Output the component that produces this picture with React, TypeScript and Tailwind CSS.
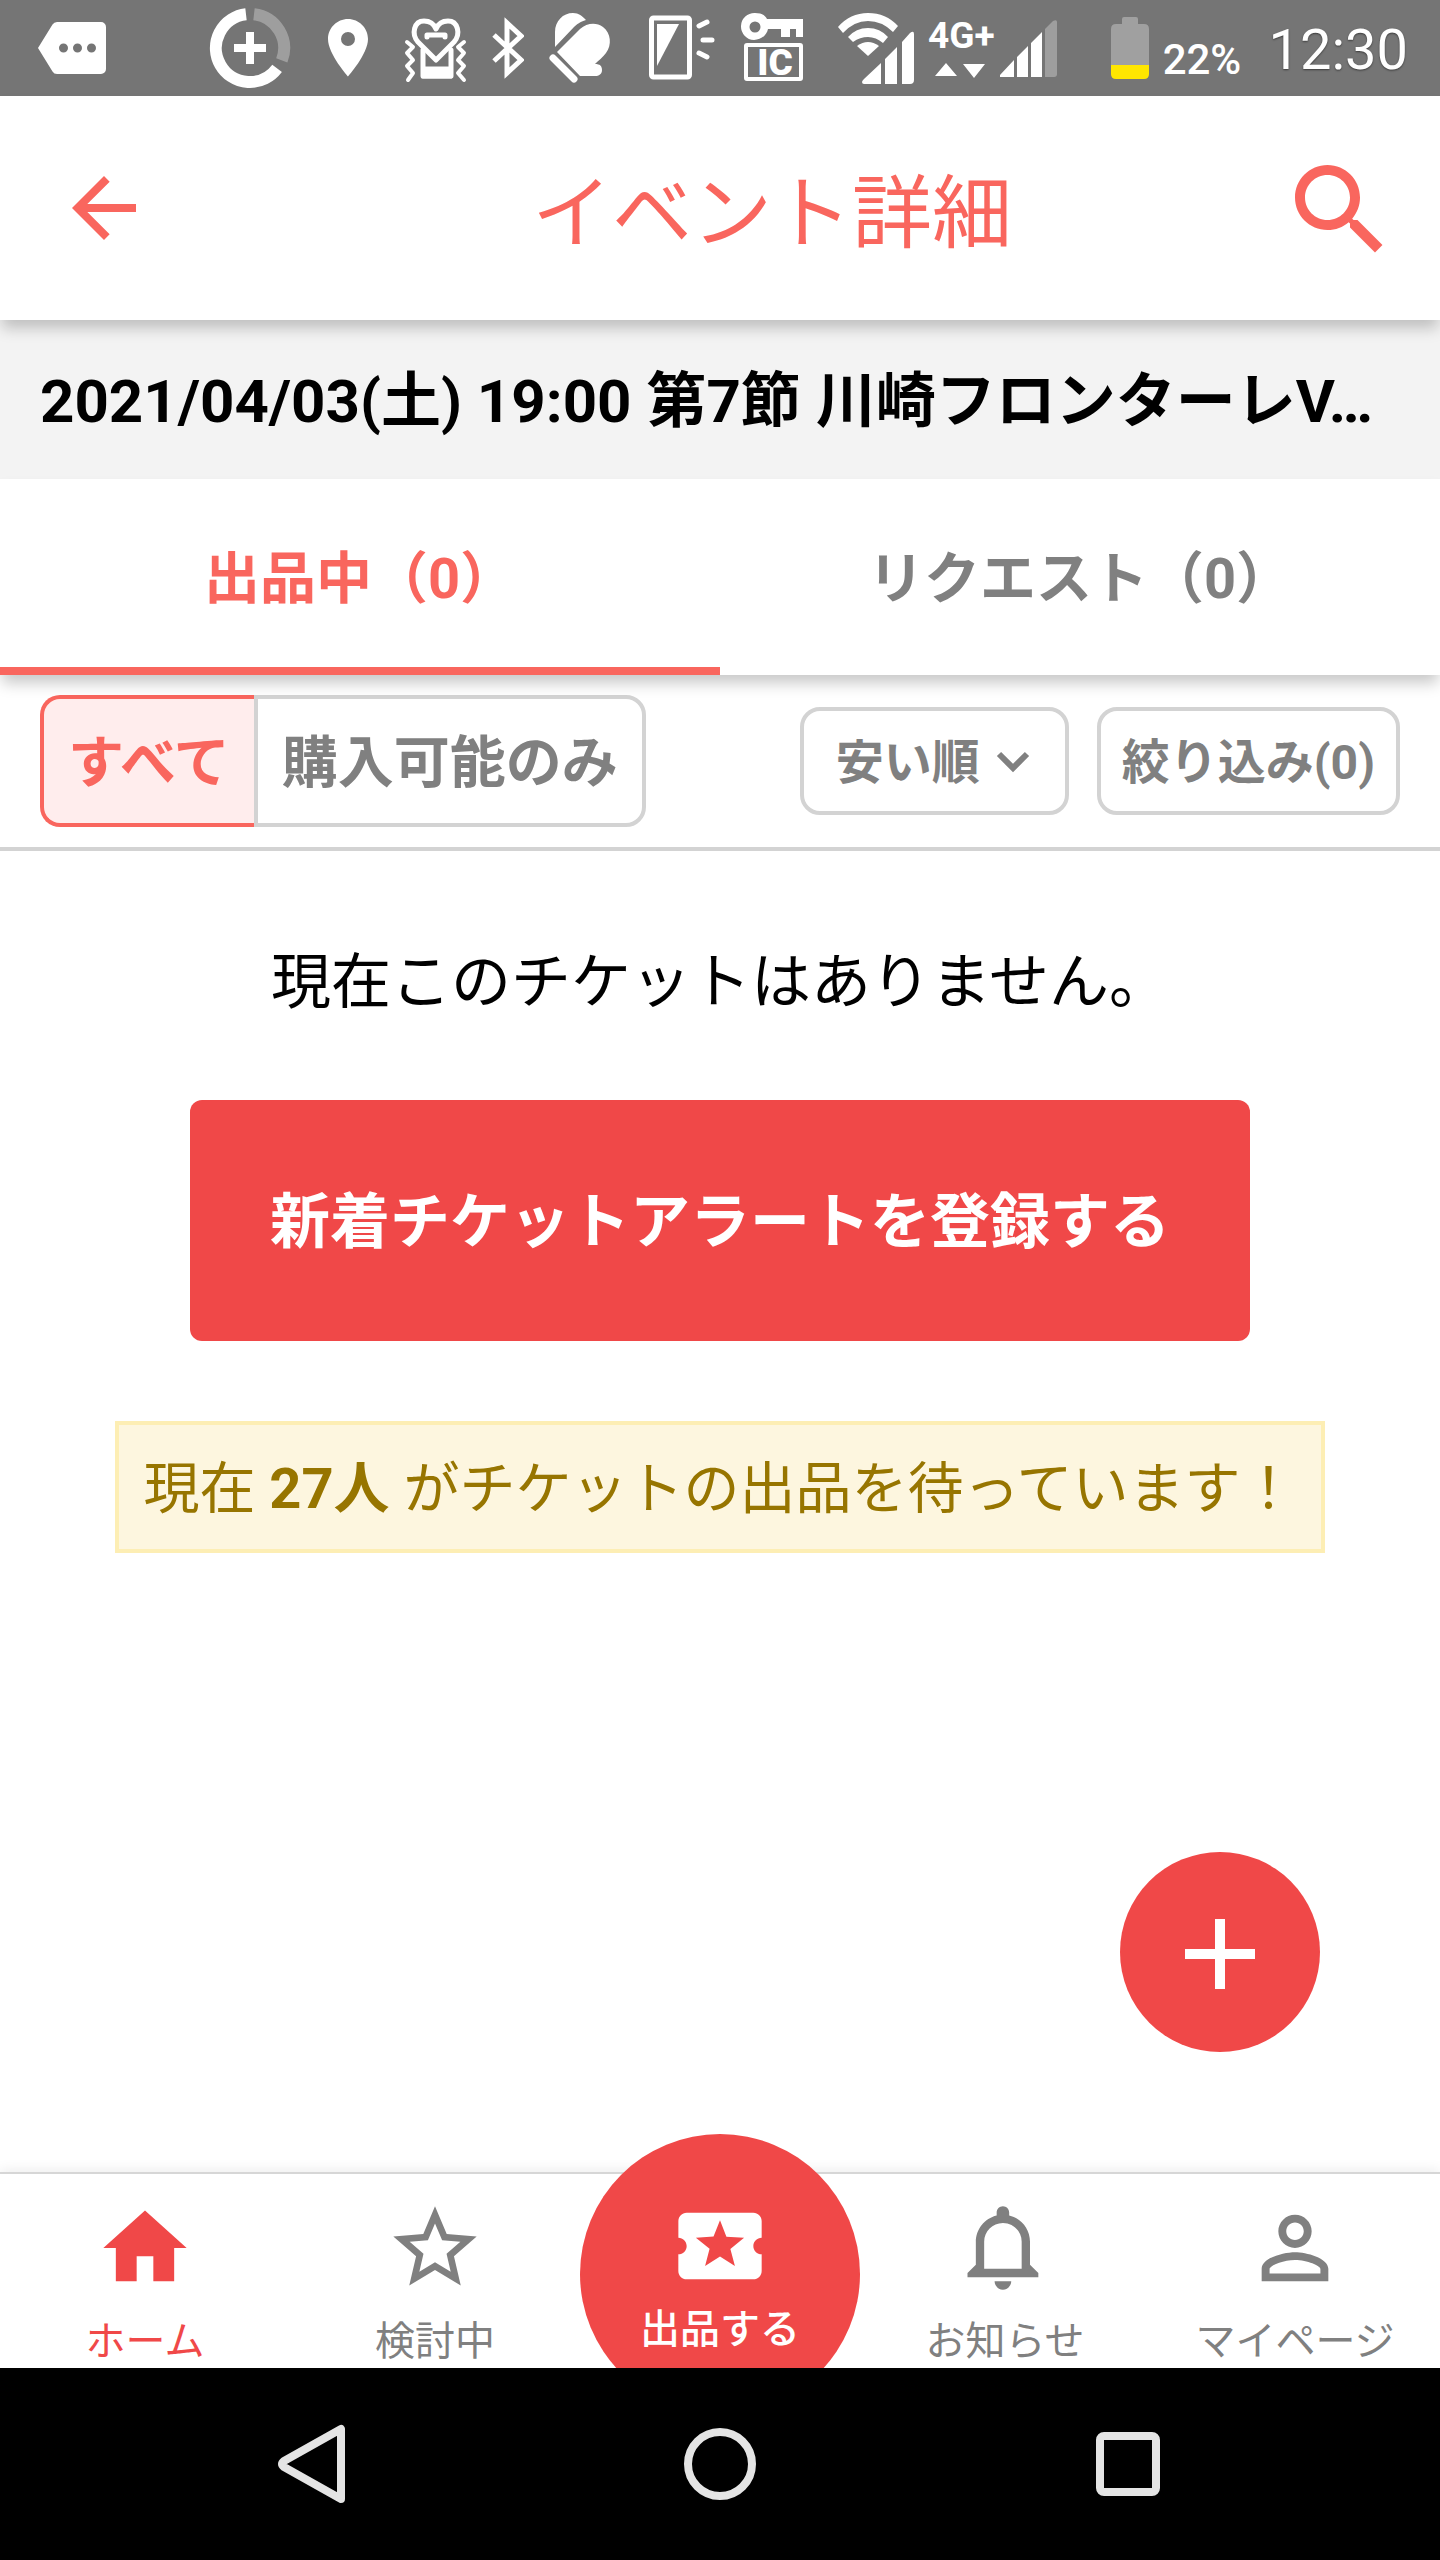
import React from 'react'
import clsx from 'clsx'

//=========Status Bar=========

function StatusBar(): React.ReactElement {
  return (
    <div className="flex h-24 shrink-0 items-center bg-[#757575] pr-8 pl-9 text-white">
      <svg className="h-24 w-18" viewBox="36 0 72 96" fill="currentColor">
        <path
          fillRule="evenodd"
          d="M57 22h44a5 5 0 0 1 5 5v42a5 5 0 0 1-5 5H57q-3 0-4.500-2.500L38 48l14.500-23.500Q54 22 57 22zM63.500 43.500a4.500 4.500 0 1 0 0 9 4.500 4.500 0 0 0 0-9zm14 0a4.500 4.500 0 1 0 0 9 4.500 4.500 0 0 0 0-9zm14 0a4.500 4.500 0 1 0 0 9 4.500 4.500 0 0 0 0-9z"
        />
      </svg>
      <svg
        className="ml-25 h-24 w-21"
        viewBox="208 0 84 96"
        fill="none"
        stroke="currentColor"
        strokeWidth="12"
      >
        <path d="M246 14.240A34 34 0 1 0 277.100 68.400" />
        <path d="M254 14.240A34 34 0 0 1 281.800 60.300" opacity=".3" />
        <path d="M250 32v32M234 48h32" strokeWidth="8" />
      </svg>
      <svg className="ml-9 h-24 w-10" viewBox="328 0 40 96" fill="currentColor">
        <path
          fillRule="evenodd"
          d="M348 19c-11 0-20 9-20 20 0 15 20 37.500 20 37.500S368 54 368 39c0-11-9-20-20-20zm0 13a7 7 0 1 1 0 14 7 7 0 0 1 0-14z"
        />
      </svg>
      <svg
        className="ml-9 h-24 w-16"
        viewBox="404 0 64 96"
        fill="none"
        stroke="currentColor"
        strokeWidth="4"
        strokeLinejoin="round"
        strokeLinecap="round"
      >
        <path d="M423 50v26h28V50M427 37v-2h18v2" strokeWidth="5" />
        <path d="M422 67h30v11h-30z" fill="currentColor" strokeWidth="1" />
        <path
          d="M436 60L418 42C411 34 414 21 424 21c6 0 10 3 12 8 2-5 6-8 12-8 10 0 13 13 6 21z"
          strokeWidth="5"
        />
        <path d="M407 42l6 5-6 6 6 7-6 6 6 7-5 7M464 42l-6 5 6 6-6 7 6 6-6 7 6 7" />
      </svg>
      <svg
        className="ml-6 h-24 w-8"
        viewBox="492 0 32 96"
        fill="none"
        stroke="currentColor"
        strokeWidth="5"
      >
        <path d="M494 35l27 25-14 13V23l14 13-27 25" />
      </svg>
      <svg className="ml-6 h-24 w-16" viewBox="548 0 64 96" fill="currentColor">
        <path d="M555 47V32c0-11 8-19 18-19 6 0 9 3 13 7-6 2-9 4-12 7z" />
        <path d="M557 52l23-23c7-6 16-7 23-2 8 6 9 18 3 26-3 4-8 8-11 11 5 0 7 2 7 6 0 4-3 6-7 6h-15z" />
        <path
          d="M553 58l21 21"
          stroke="currentColor"
          strokeWidth="7"
          strokeLinecap="round"
        />
      </svg>
      <svg
        className="ml-9 h-24 w-17"
        viewBox="648 0 68 96"
        fill="none"
        stroke="currentColor"
        strokeWidth="5"
        strokeLinecap="round"
      >
        <rect x="651.500" y="18" width="38" height="59" rx="2" />
        <path d="M657 24h22l-22 42z" fill="currentColor" stroke="none" />
        <path d="M699 26l8-4M703 40h9M699 53l8 4" />
      </svg>
      <svg className="ml-6 h-24 w-16" viewBox="740 0 64 96" fill="currentColor">
        <path
          fillRule="evenodd"
          d="M755 13c6 0 10 2 12 6h36v18h-7v-8h-6v8h-9v-8h-13c-1 6-7 11-14 11a13.500 13.500 0 1 1 1-27zm0 8.500a5.500 5.500 0 1 0 0 11 5.500 5.500 0 0 0 0-11z"
        />
        <rect
          x="746"
          y="45"
          width="55"
          height="34"
          rx="1"
          fill="none"
          stroke="currentColor"
          strokeWidth="4"
        />
        <text
          x="775"
          y="75"
          textAnchor="middle"
          className="font-['Roboto',sans-serif] text-[37px] font-black"
        >
          IC
        </text>
      </svg>
      <svg className="ml-8 h-24 w-20" viewBox="836 0 80 96" fill="currentColor">
        <path d="M838 27Q850 13 868 13T898 26L893 32Q882 21 868 21T843 33z" />
        <path d="M848 37Q856 28 868 28T888 37L883 43Q876 37 868 37T853 42z" />
        <path d="M857 46Q868 38 879 46L868 56z" />
        <path d="M862 82q0-1 2-3l17-16v21h-17q-2 0-2-2zM885 59l12-12v37h-12zM902 42l8-9q4-3 4 1v46q0 4-4 4h-8z" />
      </svg>
      <div className="ml-3 flex flex-col items-center gap-2">
        <span className="text-[37px] leading-[36px] font-bold">4G+</span>
        <svg className="h-4 w-13" viewBox="0 0 52 16" fill="currentColor">
          <path d="M0 14h22L11 1zM28 2h22L39 16z" />
        </svg>
      </div>
      <svg className="ml-1 h-24 w-15" viewBox="999 0 60 96" fill="currentColor">
        <path d="M1000 75l14-15v17h-14zM1017 57l11-11v31h-11zM1031 43l11-11v45h-11z" />
        <path d="M1045 29l8-8q4-2 4 1v52q0 3-3 3h-9z" opacity=".3" />
      </svg>
      <svg className="ml-13 h-24 w-10" viewBox="1111 0 40 96">
        <path
          d="M1116 24h6v-5q0-2 2-2h12q2 0 2 2v5h6q5 0 5 5v36h-38V29q0-5 5-5z"
          fill="#a0a0a0"
        />
        <path d="M1111 65h38v9q0 5-5 5h-28q-5 0-5-5z" fill="#ffe600" />
      </svg>
      <span className="ml-3 pt-6 text-[42px] leading-none font-medium">22%</span>
      <span className="ml-auto pt-1 text-[56px] leading-none [text-shadow:0_1px_2px_rgb(0_0_0/0.5)]">
        12:30
      </span>
    </div>
  )
}

//=========Bottom Navigation=========

const NAV_ITEMS = [
  {
    label: 'ホーム',
    active: true,
    path: 'M10 20v-6h4v6h5v-8h3L12 3 2 12h3v8z',
  },
  {
    label: '検討中',
    active: false,
    path: 'M22 9.240l-7.190-.62L12 2 9.190 8.630 2 9.240l5.460 4.730L5.820 21 12 17.270 18.180 21l-1.630-7.030L22 9.240zM12 15.400l-3.760 2.270 1-4.280-3.320-2.880 4.380-.38L12 6.100l1.710 4.040 4.380.38-3.320 2.880 1 4.280L12 15.400z',
  },
  {
    label: 'お知らせ',
    active: false,
    path: 'M11.500 22c1.100 0 2-.9 2-2h-4c0 1.100.9 2 2 2zm6.500-6v-5.500c0-3.070-2.130-5.640-5-6.320V3.500c0-.83-.67-1.500-1.500-1.500S10 2.670 10 3.500v.68c-2.870.68-5 3.250-5 6.320V16l-2 2v1h17v-1l-2-2zm-2 1H7v-6.500C7 8.010 9.010 6 11.500 6S16 8.010 16 10.500V17z',
  },
  {
    label: 'マイページ',
    active: false,
    path: 'M12 5.900c1.160 0 2.100.94 2.100 2.100s-.94 2.100-2.100 2.100S9.900 9.160 9.900 8s.94-2.100 2.100-2.100m0 9c2.970 0 6.100 1.460 6.100 2.100v1.100H5.900V17c0-.64 3.130-2.100 6.100-2.100M12 4C9.790 4 8 5.790 8 8s1.790 4 4 4 4-1.790 4-4-1.790-4-4-4zm0 9c-2.670 0-8 1.340-8 4v3h16v-3c0-2.660-5.330-4-8-4z',
  },
]

function NavItem({
  label,
  active,
  path,
}: {
  label: string
  active: boolean
  path: string
}): React.ReactElement {
  return (
    <a
      href="#"
      className={clsx(
        'flex flex-1 flex-col items-center gap-4 pt-6 text-[40px] leading-[56px]',
        active ? 'text-[#f04848]' : 'text-[#808080]',
      )}
    >
      <svg
        className="size-[100px] shrink-0"
        viewBox="0 0 24 24"
        fill="currentColor"
      >
        <path d={path} />
      </svg>
      <span className="whitespace-nowrap">{label}</span>
    </a>
  )
}

function BottomNav(): React.ReactElement {
  return (
    <nav className="h-[196px] shrink-0 border-t-2 border-[#d6d6d6] bg-white shadow-[0_-2px_12px_rgb(0_0_0/0.08)]">
      {/* the sell button rises above the bar and is cut off at its lower edge */}
      <div className="-mt-10 flex h-[234px] overflow-hidden pt-10">
        {NAV_ITEMS.slice(0, 2).map((item) => (
          <NavItem key={item.label} {...item} />
        ))}
        <a
          href="#"
          className="-mt-10 flex size-[280px] shrink-0 flex-col items-center rounded-full bg-[#f04848] pt-[62px] text-[40px] leading-[68px] font-medium text-white"
        >
          <svg
            className="size-[100px] shrink-0"
            viewBox="0 0 24 24"
            fill="currentColor"
          >
            <path d="M20 12c0-1.100.9-2 2-2V6c0-1.100-.9-2-2-2H4c-1.100 0-1.990.9-1.990 2v4c1.100 0 1.990.9 1.990 2s-.89 2-2 2v4c0 1.100.9 2 2 2h16c1.100 0 2-.9 2-2v-4c-1.100 0-2-.9-2-2zm-4.420 4.800L12 14.500l-3.580 2.300 1.080-4.120-3.290-2.690 4.240-.25L12 5.800l1.540 3.950 4.240.25-3.290 2.690 1.090 4.110z" />
          </svg>
          <span>出品する</span>
        </a>
        {NAV_ITEMS.slice(2).map((item) => (
          <NavItem key={item.label} {...item} />
        ))}
      </div>
    </nav>
  )
}

function SystemBar(): React.ReactElement {
  return (
    <div className="flex h-48 shrink-0 items-center justify-around bg-black px-27 text-[#e4e4e4]">
      <button aria-label="戻る">
        <svg
          className="size-24"
          viewBox="0 0 96 96"
          fill="none"
          stroke="currentColor"
          strokeWidth="8"
          strokeLinejoin="round"
        >
          <path d="M77 13v70L20 51q-4-3 0-6z" />
        </svg>
      </button>
      <button aria-label="ホーム">
        <svg
          className="size-24"
          viewBox="0 0 96 96"
          fill="none"
          stroke="currentColor"
          strokeWidth="8"
        >
          <circle cx="48" cy="48" r="32" />
        </svg>
      </button>
      <button aria-label="アプリ履歴">
        <svg
          className="size-24"
          viewBox="0 0 96 96"
          fill="none"
          stroke="currentColor"
          strokeWidth="8"
        >
          <rect x="20" y="20" width="56" height="56" rx="4" />
        </svg>
      </button>
    </div>
  )
}

//=========Event Detail Page=========

export default function App(): React.ReactElement {
  return (
    <div
      lang="ja"
      className="relative flex min-h-screen flex-col overflow-x-hidden bg-white font-['Roboto','Noto_Sans_CJK_JP',sans-serif] text-black"
    >
      <StatusBar />

      <header className="relative z-10 flex h-56 shrink-0 items-center bg-white pr-10 pl-14 text-[#f9665e] shadow-[0_10px_14px_-2px_rgb(0_0_0/0.22)]">
        <button aria-label="戻る">
          <svg className="size-24" viewBox="0 0 24 24" fill="currentColor">
            <path d="M20 11H7.830l5.590-5.590L12 4l-8 8 8 8 1.410-1.410L7.830 13H20v-2z" />
          </svg>
        </button>
        <h1 className="flex-1 pt-3 pl-28 text-center text-[80px] leading-none">
          イベント詳細
        </h1>
        <button aria-label="検索" className="pt-1">
          <svg className="size-30" viewBox="0 0 24 24" fill="currentColor">
            <path d="M15.500 14h-.79l-.28-.27C15.410 12.590 16 11.110 16 9.500 16 5.910 13.090 3 9.500 3S3 5.910 3 9.500 5.910 16 9.500 16c1.610 0 3.090-.59 4.230-1.570l.27.28v.79l5 4.990L20.490 19l-4.990-5zm-6 0C7.010 14 5 11.990 5 9.500S7.010 5 9.500 5 14 7.010 14 9.500 11.990 14 9.500 14z" />
          </svg>
        </button>
      </header>

      <h2 className="shrink-0 truncate bg-[#f3f3f3] px-10 pt-1 text-[60px] leading-[155px] font-bold">
        2021/04/03(土) 19:00 第7節 川崎フロンターレV…
      </h2>

      <div
        role="tablist"
        className="relative z-10 flex h-[196px] shrink-0 bg-white text-[56px] font-bold shadow-[0_10px_14px_-2px_rgb(0_0_0/0.22)]"
      >
        <button
          role="tab"
          aria-selected="true"
          className="flex-1 border-b-8 border-[#f9665e] pt-3 text-[#f9665e]"
        >
          出品中（0）
        </button>
        <button
          role="tab"
          aria-selected="false"
          className="flex-1 border-b-8 border-transparent pt-3 text-[#808080]"
        >
          リクエスト（0）
        </button>
      </div>

      <div className="flex shrink-0 items-center border-b-4 border-[#d3d3d3] px-10 py-5 font-bold text-[#808080]">
        <div className="flex h-33 text-[56px] leading-none">
          <button
            aria-pressed="true"
            className="rounded-l-[20px] border-4 border-r-0 border-[#f9665e] bg-[#ffeded] px-6 pt-1 text-[#f9665e]"
          >
            すべて
          </button>
          <button
            aria-pressed="false"
            className="rounded-r-[20px] border-4 border-[#d3d3d3] px-6 pt-1"
          >
            購入可能のみ
          </button>
        </div>
        <div className="relative ml-auto">
          <select
            aria-label="並び順"
            className="h-27 appearance-none rounded-[20px] border-4 border-[#d3d3d3] bg-transparent pt-1 pr-[84px] pl-8 text-[48px] leading-none"
          >
            <option>安い順</option>
          </select>
          <svg
            className="pointer-events-none absolute top-8 right-9 size-10"
            viewBox="0 0 40 40"
            fill="none"
            stroke="currentColor"
            strokeWidth="6"
          >
            <path d="M6 15l14 14 14-14" />
          </svg>
        </div>
        <button className="ml-7 h-27 rounded-[20px] border-4 border-[#d3d3d3] px-[21px] pt-1 text-[48px] leading-none">
          絞り込み(0)
        </button>
      </div>

      <main className="flex flex-1 flex-col items-center px-10 pt-[92px]">
        <p className="text-[60px] leading-[80px]">
          現在このチケットはありません。
        </p>
        <button className="mt-[77px] h-[241px] rounded-xl bg-[#f04848] px-20 pt-1 text-[60px] font-bold text-white">
          新着チケットアラートを登録する
        </button>
        <p className="mt-20 border-4 border-[#fdeeb4] bg-[#fdf6df] px-6 pt-1 text-[56px] leading-[120px] text-[#977500]">
          現在 <b>27人</b> がチケットの出品を待っています！
        </p>
      </main>

      <button
        aria-label="追加"
        className="absolute right-30 bottom-[508px] flex size-50 items-center justify-center rounded-full bg-[#f04848] pt-1 text-white"
      >
        <svg className="size-30" viewBox="0 0 24 24" fill="currentColor">
          <path d="M19 13h-6v6h-2v-6H5v-2h6V5h2v6h6v2z" />
        </svg>
      </button>

      <BottomNav />
      <SystemBar />
    </div>
  )
}
